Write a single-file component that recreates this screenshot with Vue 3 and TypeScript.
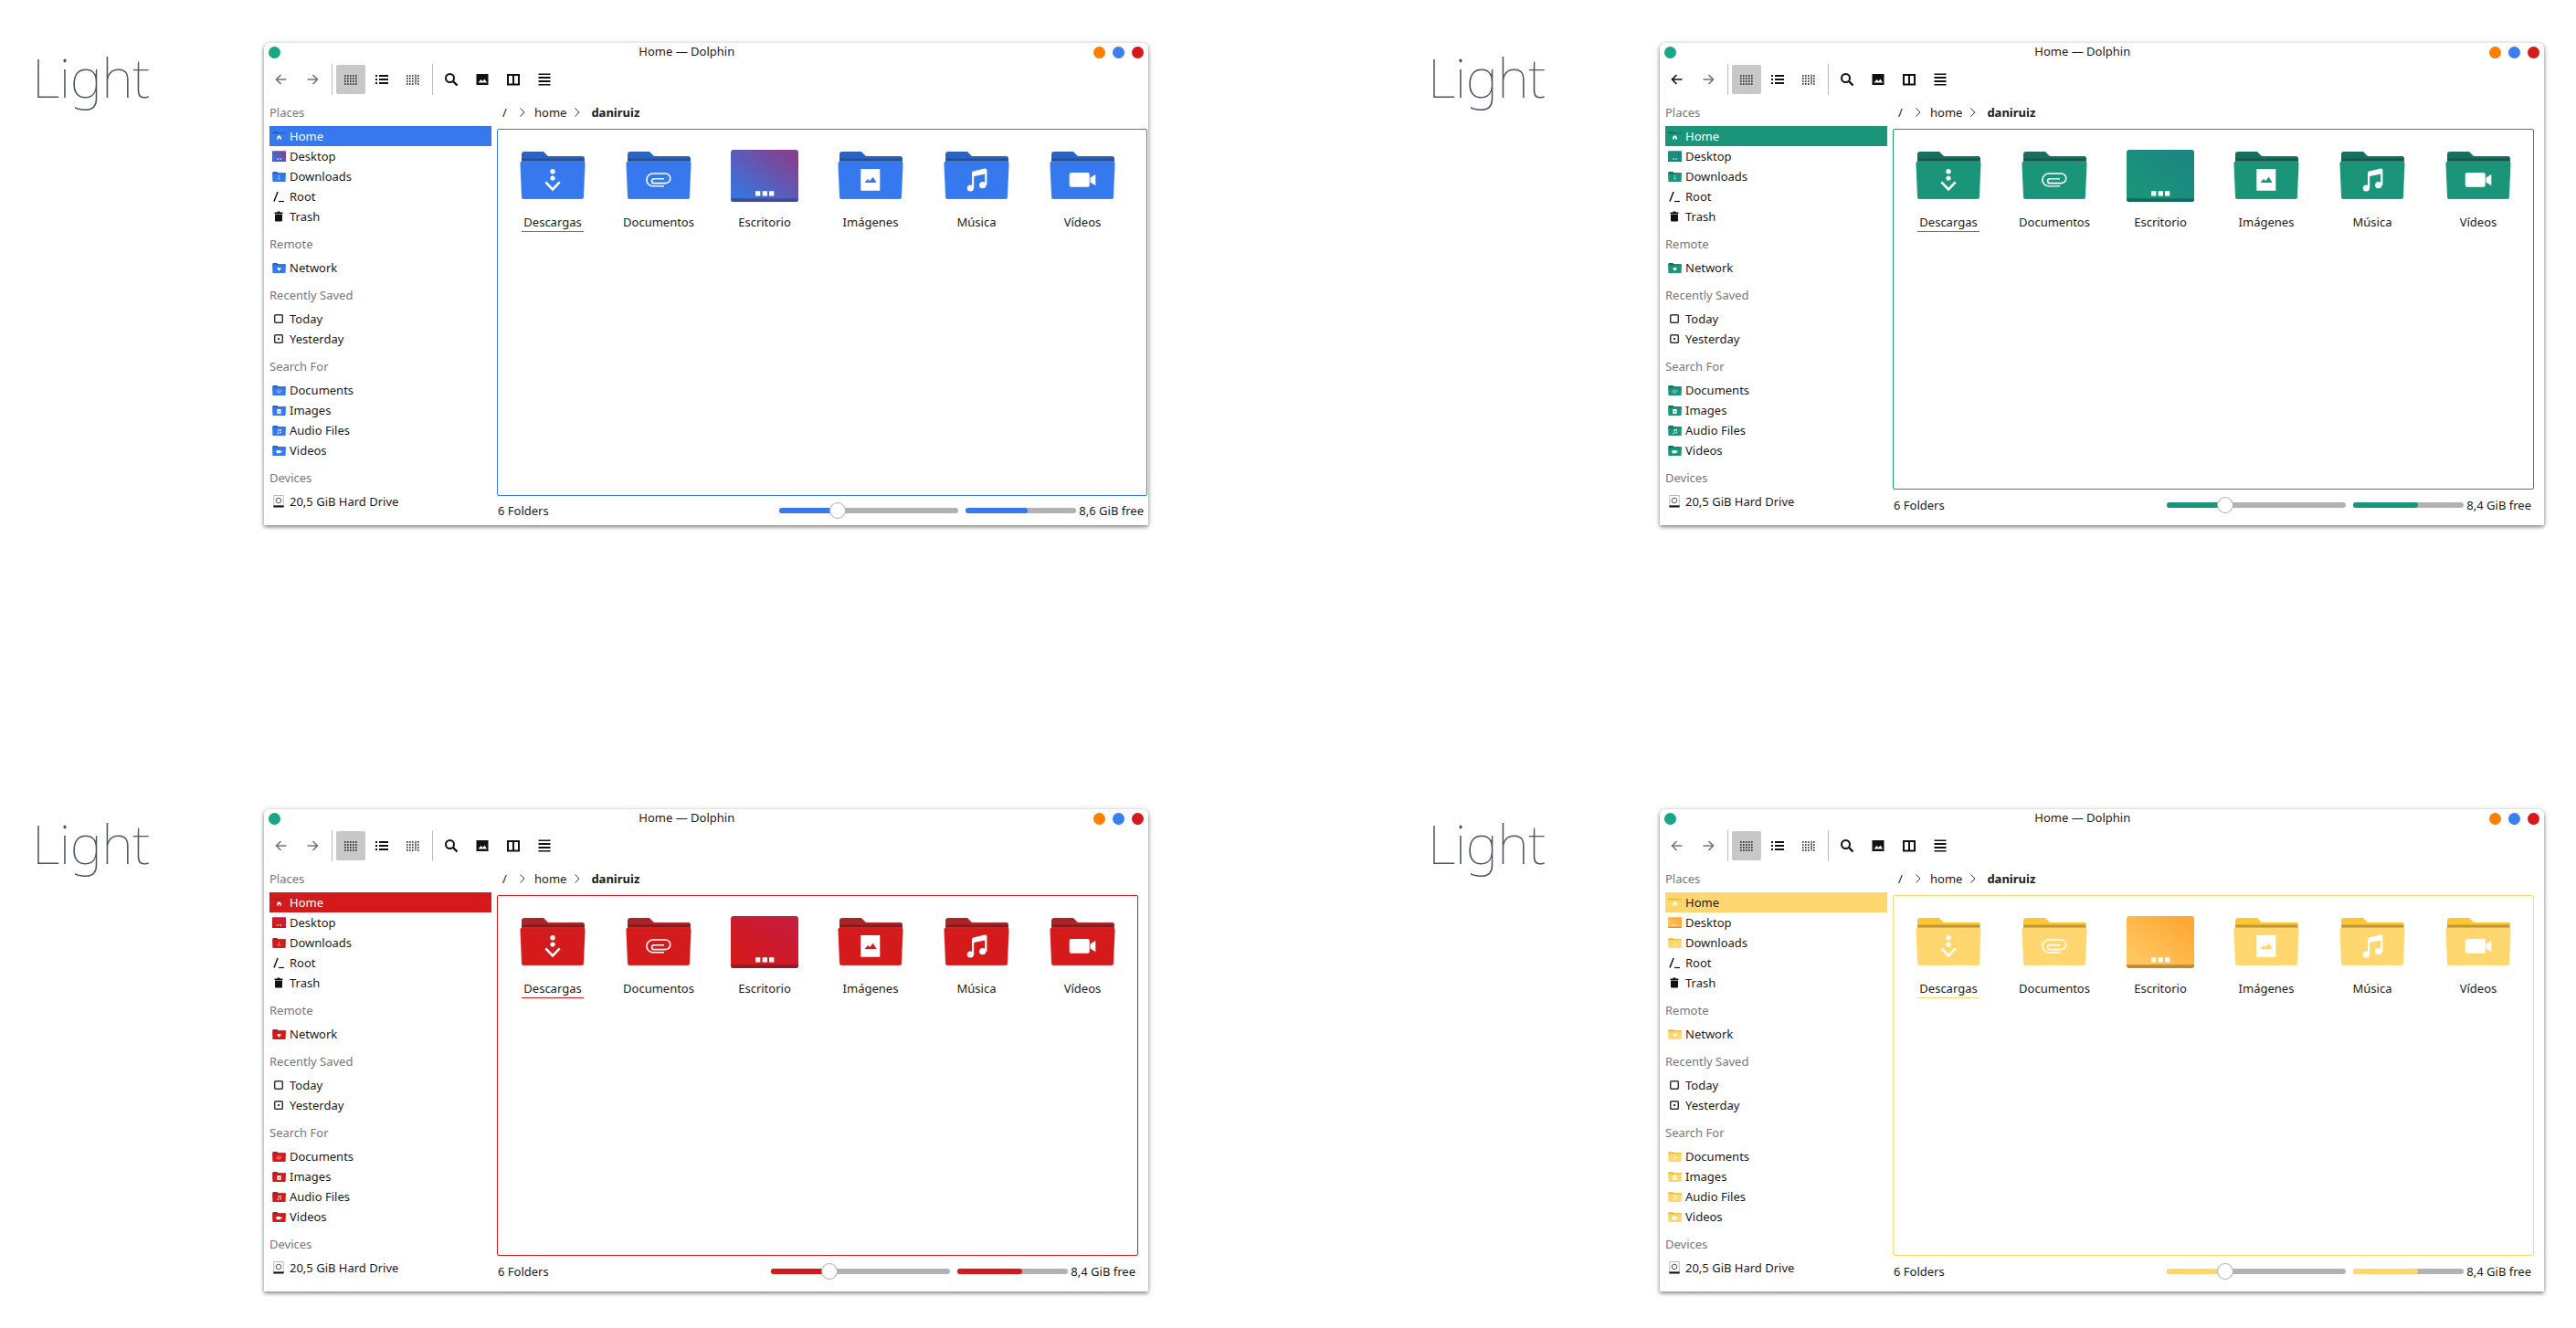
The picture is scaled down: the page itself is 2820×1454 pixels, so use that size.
<script setup lang="ts">
type Theme = {
  id: string;
  front: string;
  tab: string;
  band: string;
  deskFrom: string;
  deskTo: string;
  deskBand: string;
  selText: string;
  free: string;
  freePct: number;
  roomy: boolean;
  backActive: boolean;
};

const themes: Theme[] = [
  { id: "blue", front: "#3679ee", tab: "#2a63c0", band: "#22529e", deskFrom: "#3b72dc", deskTo: "#85408f", deskBand: "#3f4c94", selText: "#fff", free: "8,6 GiB free", freePct: 56, roomy: true, backActive: false },
  { id: "green", front: "#1a9579", tab: "#17705f", band: "#125a4c", deskFrom: "#1a9579", deskTo: "#1c8583", deskBand: "#136a5c", selText: "#fff", free: "8,4 GiB free", freePct: 58, roomy: false, backActive: true },
  { id: "red", front: "#d41a1a", tab: "#ae2326", band: "#861a1c", deskFrom: "#d41a1a", deskTo: "#c71c3e", deskBand: "#96162a", selText: "#fff", free: "8,4 GiB free", freePct: 58, roomy: false, backActive: false },
  { id: "yellow", front: "#ffd76e", tab: "#ffc62e", band: "#bf9a3c", deskFrom: "#ffc75f", deskTo: "#ffa733", deskBand: "#c08a30", selText: "#1a1a1a", free: "8,4 GiB free", freePct: 58, roomy: false, backActive: false },
];

const places = [
  {
    label: "Places",
    rows: [
      { name: "Home", icon: "home" },
      { name: "Desktop", icon: "desktop" },
      { name: "Downloads", icon: "download" },
      { name: "Root", icon: "root" },
      { name: "Trash", icon: "trash" },
    ],
  },
  { label: "Remote", rows: [{ name: "Network", icon: "network" }] },
  {
    label: "Recently Saved",
    rows: [
      { name: "Today", icon: "today" },
      { name: "Yesterday", icon: "yesterday" },
    ],
  },
  {
    label: "Search For",
    rows: [
      { name: "Documents", icon: "clip" },
      { name: "Images", icon: "image" },
      { name: "Audio Files", icon: "music" },
      { name: "Videos", icon: "video" },
    ],
  },
  { label: "Devices", rows: [{ name: "20,5 GiB Hard Drive", icon: "hdd" }] },
];

const folders = [
  { name: "Descargas", icon: "download" },
  { name: "Documentos", icon: "clip" },
  { name: "Escritorio", icon: "desktop" },
  { name: "Imágenes", icon: "image" },
  { name: "Música", icon: "music" },
  { name: "Vídeos", icon: "video" },
];

const plainIcons = ["root", "trash", "today", "yesterday", "hdd"];

function themeVars(t: Theme) {
  return {
    "--front": t.front,
    "--tab": t.tab,
    "--band": t.band,
    "--desk-band": t.deskBand,
    "--sel-text": t.selText,
  };
}
</script>

<template>
  <div class="page">
    <svg class="defs" width="0" height="0">
      <defs>
        <linearGradient v-for="t in themes" :id="'desk-' + t.id" :key="t.id" x1="0" y1="1" x2="1" y2="0">
          <stop offset="0.15" :stop-color="t.deskFrom" />
          <stop offset="0.9" :stop-color="t.deskTo" />
        </linearGradient>
        <g id="folder">
          <path class="f-tab" d="M2 14V3a3 3 0 0 1 3-3h21l5 5h37.500a2.500 2.500 0 0 1 2.500 2.500V14z" />
          <rect class="f-band" x="2" y="7.500" width="68" height="4" />
          <path class="f-front" d="M2.400 10.700h67.200a2 2 0 0 1 2 2.200L70 50a2 2 0 0 1-2 2H4a2 2 0 0 1-2-2L.4 12.900a2 2 0 0 1 2-2.200z" />
        </g>
        <g id="g-home">
          <path class="g" d="M36 18 47 28v14H40V33H32v9H25V28z" />
        </g>
        <g id="g-download">
          <circle class="g" cx="36" cy="21.700" r="2.700" />
          <circle class="g" cx="36" cy="29" r="2.600" />
          <path class="gs" d="M28.300 33.300 36 41.300l7.700-8" stroke-width="2.600" />
        </g>
        <g id="g-clip">
          <path class="gs" d="M42 37.800H29.800a6.900 6.900 0 0 1 0-13.800h13.700a5.300 5.300 0 0 1 0 10.600H31a2.400 2.400 0 0 1 0-4.800h11" stroke-width="1.600" />
        </g>
        <g id="g-image">
          <path class="g" fill-rule="evenodd" d="M25.300 19h21v23.700h-21zM29.500 34l3.500-4 2.200 2 3.600-4.300 3.700 6.300z" />
        </g>
        <g id="g-music">
          <circle class="g" cx="29.300" cy="40" r="3.600" />
          <circle class="g" cx="42.700" cy="36.700" r="3.600" />
          <path class="g" d="M31 40V23.500q0-1.500 1.500-2l12.500-3q2.400-.4 2.400 1.500V36.700h-2.200V24.500L33.200 27V40z" />
        </g>
        <g id="g-video">
          <rect class="g" x="21.700" y="23" width="22" height="15.700" rx="2" />
          <path class="g" d="M44.500 28.500 50.300 25V37.300L44.500 33.500z" />
        </g>
        <g id="g-network">
          <path class="g" d="M24 27q12-8 24 0L36 41z" />
        </g>
      </defs>
    </svg>

    <section v-for="t in themes" :key="t.id" class="cell" :style="themeVars(t)">
      <div class="heading">Light</div>
      <div class="window">
        <div class="titlebar">
          <span class="dot green"></span>
          <div class="title">Home — Dolphin</div>
          <div class="controls">
            <span class="dot orange"></span>
            <span class="dot blue"></span>
            <span class="dot red"></span>
          </div>
        </div>

        <div class="toolbar">
          <button class="tool" :class="{ dark: t.backActive }">
            <svg width="16" height="16" viewBox="0 0 16 16" fill="none" stroke="currentColor" stroke-width="1.700"><path d="M13.500 8h-11M7.500 3l-5 5 5 5" /></svg>
          </button>
          <button class="tool">
            <svg width="16" height="16" viewBox="0 0 16 16" fill="none" stroke="currentColor" stroke-width="1.700"><path d="M2.500 8h11M8.500 3l5 5-5 5" /></svg>
          </button>
          <span class="sep"></span>
          <button class="tool active dark">
            <svg width="16" height="16" viewBox="0 0 16 16" fill="none" stroke="currentColor" stroke-width="1.600" stroke-dasharray="1.600 1.400"><path d="M1 4h14M1 7h14M1 10h14M1 13h14" /></svg>
          </button>
          <button class="tool dark">
            <svg width="16" height="16" viewBox="0 0 16 16" fill="currentColor"><path d="M1 3h2v2H1zM5 3h10v2H5zM1 7h2v2H1zM5 7h10v2H5zM1 11h2v2H1zM5 11h10v2H5z" /></svg>
          </button>
          <button class="tool dark">
            <svg width="16" height="16" viewBox="0 0 16 16" fill="none" stroke="currentColor" stroke-width="1.600">
              <path stroke-dasharray="1.600 1.400" d="M1 4h8.600M1 7h8.600M1 10h8.600M1 13h8.600" />
              <path stroke-width="1" d="M11 2.500v11" />
              <path stroke-dasharray="1.600 1.400" d="M13 4h2M13 7h2M13 10h2M13 13h2" />
            </svg>
          </button>
          <span class="sep"></span>
          <button class="tool dark">
            <svg width="16" height="16" viewBox="0 0 16 16" fill="none" stroke="currentColor"><circle cx="6.500" cy="6.500" r="4.500" stroke-width="2" /><path d="M10 10l4.500 4.500" stroke-width="2.400" /></svg>
          </button>
          <button class="tool dark">
            <svg width="16" height="16" viewBox="0 0 16 16" fill="currentColor"><path fill-rule="evenodd" d="M1.500 2h13v12h-13zM3.500 11.500l3-3.500 2 2 2-2.500 2.500 4z" /></svg>
          </button>
          <button class="tool dark">
            <svg width="16" height="16" viewBox="0 0 16 16" fill="none" stroke="currentColor" stroke-width="2"><path d="M2 3h12v10.500H2zM8 3v10.500" /></svg>
          </button>
          <button class="tool dark">
            <svg width="16" height="16" viewBox="0 0 16 16" fill="currentColor"><path d="M1.500 1.500h13v1.500h-13zM1.500 5h13v2h-13zM1.500 9h13v2h-13zM1.500 13h13v1.500h-13z" /></svg>
          </button>
        </div>

        <div class="body">
          <aside class="sidebar">
            <div v-for="group in places" :key="group.label" class="group">
              <div class="group-label">{{ group.label }}</div>
              <div v-for="row in group.rows" :key="row.name" class="row" :class="{ selected: row.name === 'Home' }">
                <span class="row-icon">
                  <svg v-if="row.icon === 'desktop'" width="15" height="12" viewBox="0 0 74 57">
                    <rect width="74" height="57" rx="3" :fill="'url(#desk-' + t.id + ')'" />
                    <rect class="desk-band" y="52" width="74" height="5" />
                    <path class="g" d="M27 40h6v7h-6zM42 40h6v7h-6z" />
                  </svg>
                  <svg v-else-if="row.icon === 'root'" width="16" height="16" viewBox="0 0 16 16" fill="none" stroke="#111">
                    <path d="M3 13.500 7 3" stroke-width="1.500" />
                    <path d="M8 13.500h6" stroke-width="1.200" />
                  </svg>
                  <svg v-else-if="row.icon === 'trash'" width="16" height="16" viewBox="0 0 16 16" fill="#111">
                    <path d="M6.500 2.500h3v1h-3zM3.500 3.500h9V5h-9zM4 5.500h8v7a1 1 0 0 1-1 1H5a1 1 0 0 1-1-1z" />
                  </svg>
                  <svg v-else-if="row.icon === 'today' || row.icon === 'yesterday'" width="16" height="16" viewBox="0 0 16 16">
                    <rect x="3.700" y="3.700" width="8.600" height="8.600" rx="1" fill="none" stroke="#333" stroke-width="1.500" />
                    <rect v-if="row.icon === 'yesterday'" x="7" y="7" width="2" height="2" fill="#333" />
                  </svg>
                  <svg v-else-if="row.icon === 'hdd'" width="16" height="16" viewBox="0 0 16 16">
                    <rect x="2.800" y="1.500" width="10.400" height="11" fill="#fff" stroke="#bbb" />
                    <circle cx="8" cy="7" r="2.800" fill="none" stroke="#555" />
                    <rect x="2.300" y="12.500" width="11.400" height="2" fill="#111" />
                  </svg>
                  <svg v-else-if="!plainIcons.includes(row.icon)" width="15" height="11" viewBox="0 0 72 52">
                    <use href="#folder" />
                    <use :href="'#g-' + row.icon" />
                  </svg>
                </span>
                <span class="row-name">{{ row.name }}</span>
              </div>
            </div>
          </aside>

          <div class="main" :class="{ roomy: t.roomy }">
            <div class="crumbs">
              <span class="crumb-root">/</span>
              <svg class="chev" width="8" height="12" viewBox="0 0 8 12" fill="none" stroke="#333"><path d="M1.500 1.500 6 6l-4.500 4.500" /></svg>
              <span class="crumb-home">home</span>
              <svg class="chev" width="8" height="12" viewBox="0 0 8 12" fill="none" stroke="#333"><path d="M1.500 1.500 6 6l-4.500 4.500" /></svg>
              <span class="crumb-current">daniruiz</span>
            </div>

            <div class="frame">
              <div v-for="f in folders" :key="f.name" class="item">
                <div class="item-icon">
                  <svg v-if="f.icon === 'desktop'" width="74" height="57" viewBox="0 0 74 57">
                    <rect width="74" height="57" rx="3" :fill="'url(#desk-' + t.id + ')'" />
                    <path class="desk-band" d="M0 53.300h74V54a3 3 0 0 1-3 3H3a3 3 0 0 1-3-3z" />
                    <path class="g" d="M27 45.300h5.300v5.300H27zM34.700 45.300H40v5.300h-5.300zM42 45.300h5.300v5.300H42z" />
                  </svg>
                  <svg v-else width="72" height="52" viewBox="0 0 72 52">
                    <use href="#folder" />
                    <use :href="'#g-' + f.icon" />
                  </svg>
                </div>
                <div class="item-name" :class="{ current: f.name === 'Descargas' }">{{ f.name }}</div>
              </div>
            </div>

            <div class="status">
              <span>6 Folders</span>
              <div class="slider">
                <div class="fill" :style="{ width: '33%' }"></div>
                <span class="handle"></span>
              </div>
              <div class="capacity">
                <div class="fill" :style="{ width: t.freePct + '%' }"></div>
              </div>
              <span class="free">{{ t.free }}</span>
            </div>
          </div>
        </div>
      </div>
    </section>
  </div>
</template>

<style>
html,
body {
  margin: 0;
  background: #fff;
}
</style>

<style scoped>
.page {
  display: grid;
  grid-template-columns: 1528px 1292px;
  grid-auto-rows: 839px;
  padding-top: 47px;
  height: 1407px;
  overflow: hidden;
  font-family: "Noto Sans", "Open Sans", sans-serif;
  font-size: 13px;
  color: #1a1a1a;
}
.defs {
  position: absolute;
}
.cell {
  display: flex;
  align-items: flex-start;
}
.heading {
  width: 254px;
  padding: 1px 0 0 35px;
  font-size: 60px;
  line-height: 72px;
  font-weight: 100;
  letter-spacing: -0.5px;
  color: #4d5566;
}

.window {
  width: 968px;
  height: 528px;
  display: flex;
  flex-direction: column;
  background: #fff;
  border-radius: 6px 6px 0 0;
  box-shadow: 0 2px 4px rgba(0, 0, 0, 0.45), 0 0 6px rgba(0, 0, 0, 0.12);
}

.titlebar {
  height: 20px;
  display: flex;
  align-items: center;
  padding: 0 5.500px 0 5px;
}
.title {
  flex: 1;
  text-align: center;
  line-height: 18px;
  margin-top: -2px;
}
.controls {
  display: flex;
  gap: 8.500px;
}
.dot {
  width: 12.500px;
  height: 13px;
  border-radius: 50%;
}
.green { background: #1aa586; }
.orange { background: #ff7f00; }
.blue { background: #3b7fef; }
.red { background: #d41a1a; }

.toolbar {
  height: 41px;
  box-sizing: border-box;
  padding: 4px 0 0 2px;
  display: flex;
  align-items: flex-start;
}
.tool {
  width: 34px;
  height: 32px;
  padding: 0;
  border: 0;
  background: none;
  display: flex;
  align-items: center;
  justify-content: center;
  color: #777;
}
.tool.dark {
  color: #111;
}
.tool.active {
  background: #c8c8c8;
  border-radius: 2px;
  width: 32px;
  margin: 0 1px;
}
.sep {
  width: 1px;
  height: 34px;
  margin: -1px 3px 0 4px;
  background: #bdbdbd;
}

.body {
  flex: 1;
  display: flex;
  min-height: 0;
}
.sidebar {
  width: 249px;
  padding-left: 6px;
  flex-shrink: 0;
}
.group {
  margin-bottom: 4px;
}
.group-label {
  height: 30px;
  line-height: 30px;
  color: #777;
}
.row {
  height: 22px;
  display: flex;
  align-items: center;
  gap: 4px;
  padding-left: 2px;
  width: 241px;
}
.row.selected {
  background: var(--front);
  color: var(--sel-text);
}
.row-icon {
  width: 16px;
  height: 16px;
  display: flex;
  align-items: center;
  justify-content: center;
}
.row-name {
  line-height: 22px;
}

.main {
  flex: 1;
  min-width: 0;
  display: flex;
  flex-direction: column;
  padding-right: 11px;
  --status-h: 39px;
  --status-pb: 5px;
  --status-pr: 3px;
}
.main.roomy {
  padding-right: 1px;
  --status-h: 32px;
  --status-pb: 0px;
  --status-pr: 4px;
}
.crumbs {
  height: 33px;
  box-sizing: border-box;
  padding: 0 0 3px 6px;
  display: flex;
  align-items: center;
}
.crumb-root { width: 18px; }
.crumb-home { margin: 0 8px 0 9px; }
.crumb-current {
  margin-left: 11px;
  font-weight: 700;
}
.frame {
  flex: 1;
  min-height: 0;
  border: 1px solid var(--front);
  border-radius: 2px;
  display: flex;
  align-items: flex-start;
  padding-left: 2px;
}
.item {
  width: 116px;
  padding-top: 18px;
  display: flex;
  flex-direction: column;
  align-items: center;
}
.item-icon {
  height: 64px;
  display: flex;
  align-items: center;
  justify-content: center;
}
.item-name {
  margin-top: 10px;
  height: 19px;
  line-height: 18px;
  text-align: center;
}
.item-name.current {
  width: 68px;
  border-bottom: 1px solid var(--front);
}

.status {
  height: var(--status-h);
  box-sizing: border-box;
  padding: 0 var(--status-pr) var(--status-pb) 1px;
  display: flex;
  align-items: center;
  line-height: 18px;
}
.slider,
.capacity {
  position: relative;
  height: 6px;
  border-radius: 3px;
  background: #b2b2b2;
}
.slider {
  width: 196px;
  margin-left: auto;
}
.capacity {
  width: 121px;
  margin-left: 8px;
}
.fill {
  height: 100%;
  border-radius: 3px;
  background: var(--front);
}
.handle {
  position: absolute;
  left: 55px;
  top: -6px;
  width: 16px;
  height: 16px;
  border: 1px solid #b0b0b0;
  border-radius: 50%;
  background: #fff;
}
.free {
  margin-left: 3px;
}

.f-tab { fill: var(--tab); }
.f-band { fill: var(--band); }
.f-front {
  fill: var(--front);
  stroke: rgba(255, 255, 255, 0.3);
  stroke-width: 0.5;
}
.desk-band { fill: var(--desk-band); }
.g { fill: #fff; }
.gs { fill: none; stroke: #fff; }
</style>
